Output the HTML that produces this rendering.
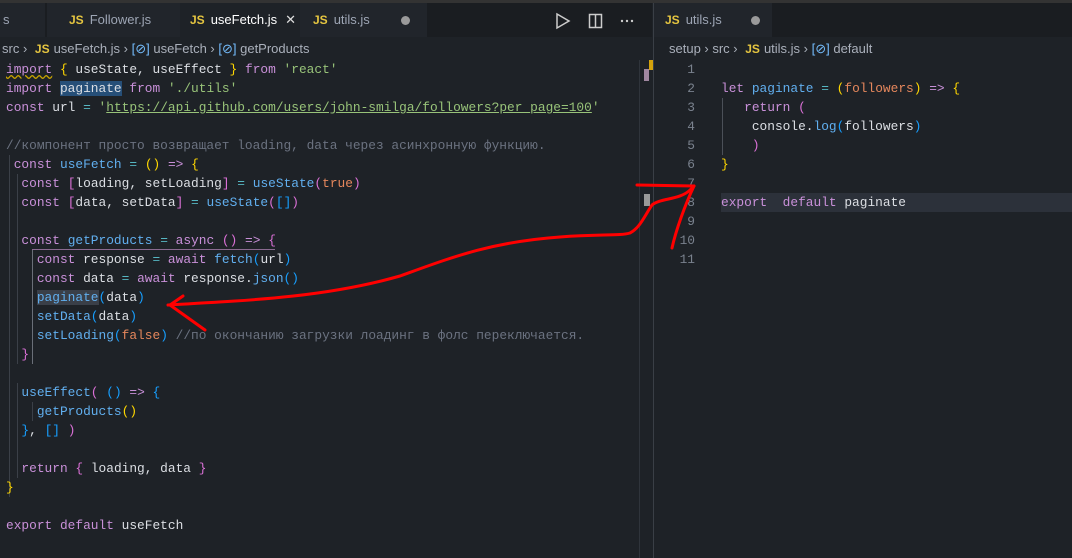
<!DOCTYPE html>
<html><head><meta charset="utf-8"><style>
*{margin:0;padding:0;box-sizing:border-box}
body{width:1072px;height:558px;background:#1e2227;overflow:hidden;position:relative;font-family:"Liberation Sans",sans-serif}
.top{position:absolute;left:0;top:0;width:1072px;height:3px;background:#333}
.tabs{position:absolute;top:3px;height:34px;background:#1a1d21}
.tab{position:absolute;top:3px;height:34px;line-height:34px;font-size:13px;color:#9da5b4;background:#21252b;white-space:nowrap}
.tab.act{background:#1e2227;color:#fff}
.js{color:#e5c540;font-weight:bold;font-size:12px;margin-right:6px}
.bc{position:absolute;top:40px;height:18px;line-height:18px;font-size:13px;color:#aab0bb;white-space:nowrap}
.code{position:absolute;font-family:"Liberation Mono",monospace;font-size:12.85px;white-space:pre;color:#dcdfe4}
.ln{position:absolute;height:19px;line-height:19px;left:0}
.k{color:#c990d9}.f{color:#61afef}.s{color:#98c379}.c{color:#6b7280}.o{color:#56b6c2}.y{color:#ffd700}.p{color:#da70d6}.b{color:#179fff}.r{color:#e5875c}
.num{position:absolute;font-family:"Liberation Mono",monospace;font-size:12.85px;color:#7a828e;text-align:right;width:40px;height:19px;line-height:19px}
.guide{position:absolute;width:1px;background:#3b4048}
</style></head><body>
<div class="top"></div>
<div class="tabs" style="left:0;width:652px"></div>
<div class="tab" style="left:0;width:45px;padding-left:3px">s</div>
<div class="tab" style="left:47px;width:133px;padding-left:22px"><span class="js">JS</span>Follower.js</div>
<div class="tab act" style="left:180px;width:120px;padding-left:10px"><span class="js">JS</span>useFetch.js<span style="color:#ddd;margin-left:8px">✕</span></div>
<div class="tab" style="left:300px;width:127px;padding-left:13px"><span class="js">JS</span>utils.js<span style="position:absolute;left:101px;top:13px;width:9px;height:9px;border-radius:50%;background:#9a9a9a"></span></div>
<svg style="position:absolute;left:550px;top:10px" width="100" height="24" viewBox="0 0 100 24"><path d="M7 4 L19 11 L7 18 Z" fill="none" stroke="#ccc" stroke-width="1.5"/><rect x="39.5" y="4.5" width="12" height="13" fill="none" stroke="#ccc" stroke-width="1.5"/><line x1="45.5" y1="4" x2="45.5" y2="18" stroke="#ccc" stroke-width="1.5"/><circle cx="72" cy="11" r="1.2" fill="#ccc"/><circle cx="77" cy="11" r="1.2" fill="#ccc"/><circle cx="82" cy="11" r="1.2" fill="#ccc"/></svg>
<div class="tabs" style="left:654px;width:418px"></div>
<div class="tab" style="left:654px;width:118px;padding-left:11px"><span class="js">JS</span>utils.js<span style="position:absolute;left:97px;top:13px;width:9px;height:9px;border-radius:50%;background:#9a9a9a"></span></div>
<div style="position:absolute;left:653px;top:3px;width:1px;height:555px;background:#3a3f46"></div>
<div style="position:absolute;left:639px;top:60px;width:1px;height:498px;background:#2f343b"></div>
<div style="position:absolute;left:649px;top:60px;width:4px;height:10px;background:#d4a20c"></div>
<div style="position:absolute;left:644px;top:69px;width:5px;height:12px;background:#a087a0"></div>
<div style="position:absolute;left:644px;top:194px;width:6px;height:12px;background:#999"></div>
<div class="bc" style="left:2px">src › <span class="js" style="margin:0 4px">JS</span>useFetch.js › <span style="color:#75beff">[⊘]</span> useFetch › <span style="color:#75beff">[⊘]</span> getProducts</div>
<div class="bc" style="left:669px">setup › src › <span class="js" style="margin:0 4px">JS</span>utils.js › <span style="color:#75beff">[⊘]</span> default</div>

<div class="guide" style="left:9px;top:155px;height:342px"></div>
<div class="guide" style="left:17px;top:174px;height:190px"></div>
<div class="guide" style="left:17px;top:383px;height:95px"></div>
<div class="guide" style="left:32px;top:250px;height:114px;background:#6a6f78"></div>
<div style="position:absolute;left:32px;top:249px;width:243px;height:1px;background:#8a6a90"></div>
<div class="guide" style="left:32px;top:402px;height:19px"></div>

<div class="code" style="left:6px;top:60px">
<div class="ln" style="top:0"><span class="k" style="text-decoration:underline wavy #c9a400">import</span> <span class="y">{</span> useState, useEffect <span class="y">}</span> <span class="k">from</span> <span class="s">'react'</span></div>
<div class="ln" style="top:19px"><span class="k">import</span> <span style="background:#264f78">paginate</span> <span class="k">from</span> <span class="s">'./utils'</span></div>
<div class="ln" style="top:38px"><span class="k">const</span> url <span class="o">=</span> <span class="s">'<span style="text-decoration:underline">https://api.github.com/users/john-smilga/followers?per_page=100</span>'</span></div>
<div class="ln c" style="top:76px">//компонент просто возвращает loading, data через асинхронную функцию.</div>
<div class="ln" style="top:95px"> <span class="k">const</span> <span class="f">useFetch</span> <span class="o">=</span> <span class="y">()</span> <span class="k">=&gt;</span> <span class="y">{</span></div>
<div class="ln" style="top:114px">  <span class="k">const</span> <span class="p">[</span>loading, setLoading<span class="p">]</span> <span class="o">=</span> <span class="f">useState</span><span class="p">(</span><span class="r">true</span><span class="p">)</span></div>
<div class="ln" style="top:133px">  <span class="k">const</span> <span class="p">[</span>data, setData<span class="p">]</span> <span class="o">=</span> <span class="f">useState</span><span class="p">(</span><span class="b">[]</span><span class="p">)</span></div>
<div class="ln" style="top:171px">  <span class="k">const</span> <span class="f">getProducts</span> <span class="o">=</span> <span class="k">async</span> <span class="p">()</span> <span class="k">=&gt;</span> <span class="p">{</span></div>
<div class="ln" style="top:190px">    <span class="k">const</span> response <span class="o">=</span> <span class="k">await</span> <span class="f">fetch</span><span class="b">(</span>url<span class="b">)</span></div>
<div class="ln" style="top:209px">    <span class="k">const</span> data <span class="o">=</span> <span class="k">await</span> response.<span class="f">json</span><span class="b">()</span></div>
<div class="ln" style="top:228px">    <span class="f" style="background:#3a3f48">paginate</span><span class="b">(</span>data<span class="b">)</span></div>
<div class="ln" style="top:247px">    <span class="f">setData</span><span class="b">(</span>data<span class="b">)</span></div>
<div class="ln" style="top:266px">    <span class="f">setLoading</span><span class="b">(</span><span class="r">false</span><span class="b">)</span> <span class="c">//по окончанию загрузки лоадинг в фолс переключается.</span></div>
<div class="ln" style="top:285px">  <span class="p">}</span></div>
<div class="ln" style="top:323px">  <span class="f">useEffect</span><span class="p">(</span> <span class="b">()</span> <span class="k">=&gt;</span> <span class="b">{</span></div>
<div class="ln" style="top:342px">    <span class="f">getProducts</span><span class="y">()</span></div>
<div class="ln" style="top:361px">  <span class="b">}</span>, <span class="b">[]</span> <span class="p">)</span></div>
<div class="ln" style="top:399px">  <span class="k">return</span> <span class="p">{</span> loading, data <span class="p">}</span></div>
<div class="ln" style="top:418px"><span class="y">}</span></div>
<div class="ln" style="top:456px"><span class="k">export</span> <span class="k">default</span> useFetch</div>
</div>

<div style="position:absolute;left:721px;top:193px;width:351px;height:19px;background:#2c313a"></div>
<div class="guide" style="left:722px;top:98px;height:57px;background:#4b5058"></div>
<div style="position:absolute;left:655px;top:60px">
<div class="num" style="top:0">1</div><div class="num" style="top:19px">2</div><div class="num" style="top:38px">3</div><div class="num" style="top:57px">4</div><div class="num" style="top:76px">5</div><div class="num" style="top:95px">6</div><div class="num" style="top:114px">7</div><div class="num" style="top:133px">8</div><div class="num" style="top:152px">9</div><div class="num" style="top:171px">10</div><div class="num" style="top:190px">11</div>
</div>
<div class="code" style="left:721px;top:79px">
<div class="ln" style="top:0"><span class="k">let</span> <span class="f">paginate</span> <span class="o">=</span> <span class="y">(</span><span class="r">followers</span><span class="y">)</span> <span class="k">=&gt;</span> <span class="y">{</span></div>
<div class="ln" style="top:19px">   <span class="k">return</span> <span class="p">(</span></div>
<div class="ln" style="top:38px">    console.<span class="f">log</span><span class="b">(</span>followers<span class="b">)</span></div>
<div class="ln" style="top:57px">    <span class="p">)</span></div>
<div class="ln" style="top:76px"><span class="y">}</span></div>
<div class="ln" style="top:114px"><span class="k">export</span>  <span class="k">default</span> paginate</div>
</div>

<svg style="position:absolute;left:0;top:0" width="1072" height="558" viewBox="0 0 1072 558">
<g fill="none" stroke="#ff0000" stroke-width="3" stroke-linecap="round" stroke-linejoin="round">
<path d="M637 185 L694 186"/>
<path d="M694 186 C685 205 676 230 672 248"/>
<path d="M168 305 C260 300 330 296 400 276 C450 258 490 242 560 237 C600 234 620 236 630 233 C640 228 645 215 652 205 C660 198 680 200 690 190 L694 186"/>
<path d="M183 296 L170 305 L205 330"/>
</g></svg>
</body></html>
